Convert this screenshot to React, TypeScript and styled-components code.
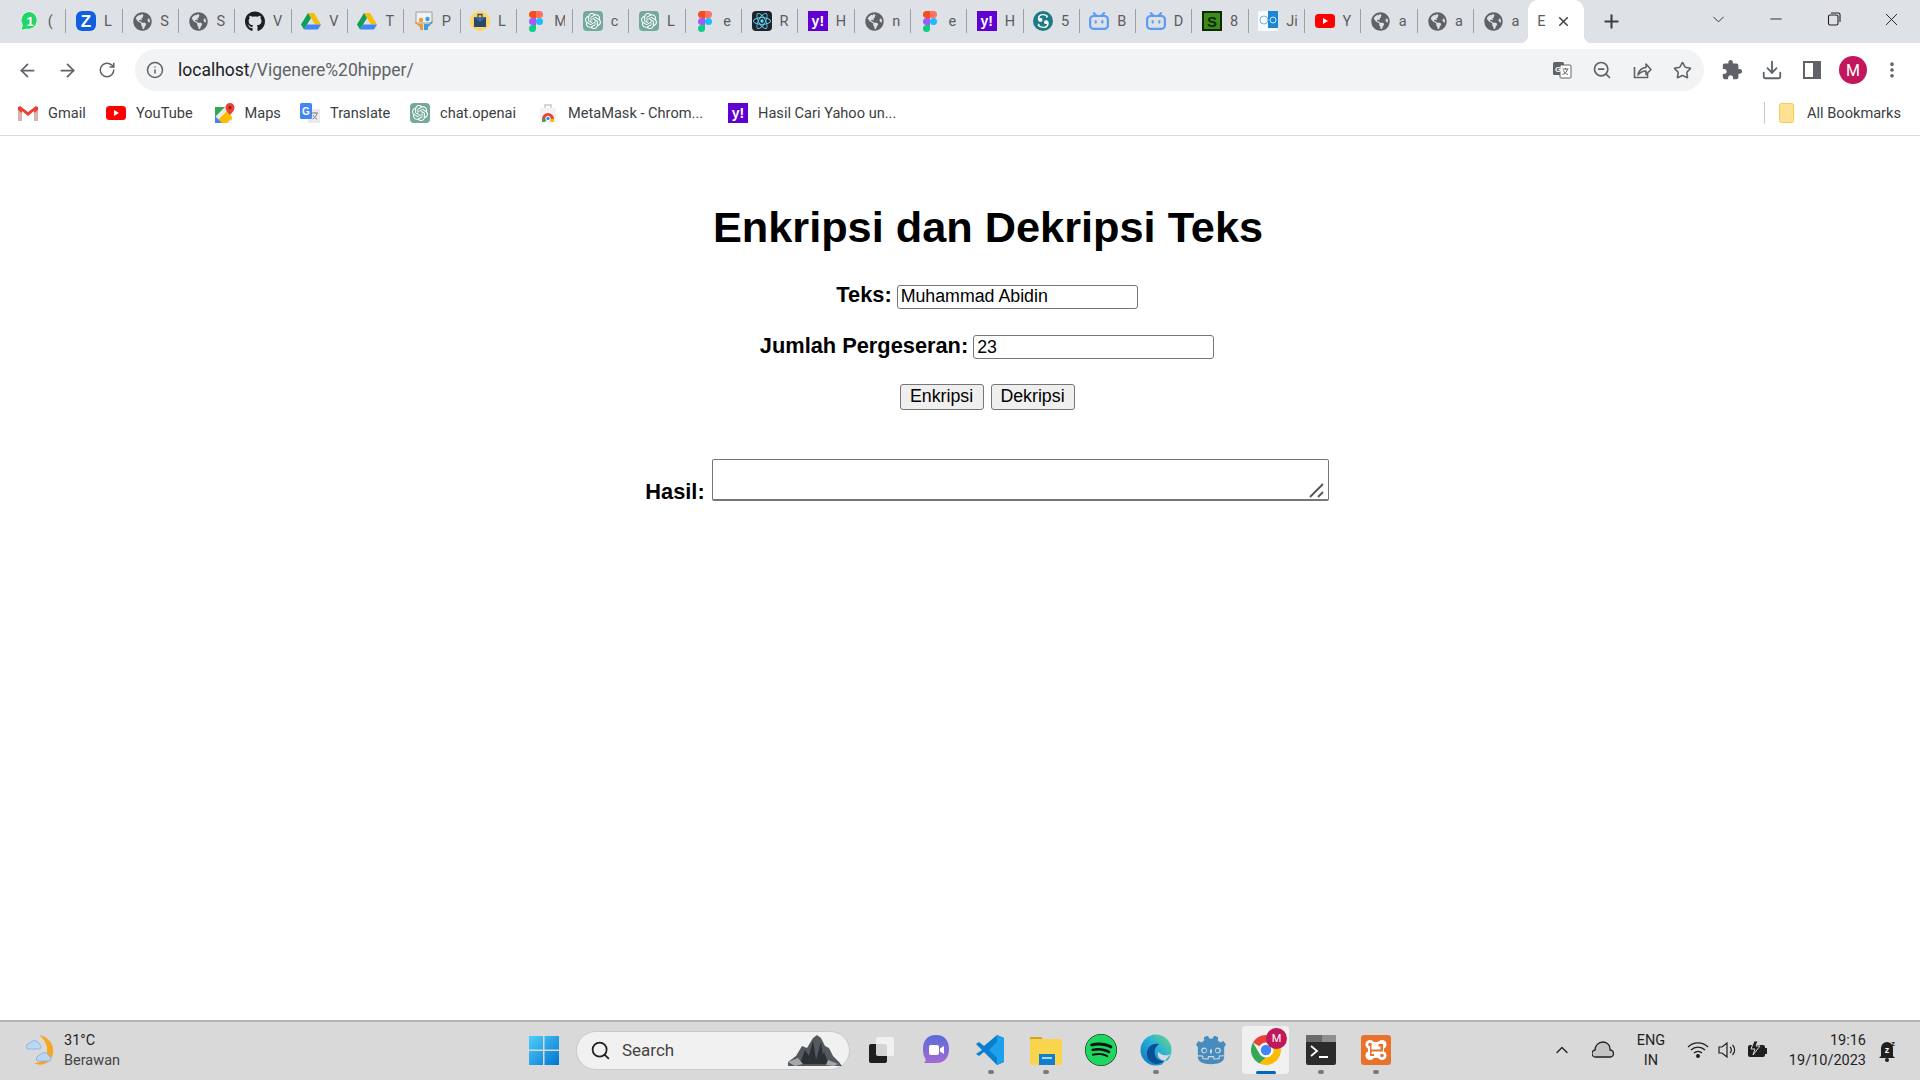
import React from "react";
import styled, { createGlobalStyle } from "styled-components";
import { ArrowLeft, ArrowRight, RotateCw, Info, ZoomOut, Star, Download, MoreVertical, Plus, X, Minus, ChevronDown, ChevronUp, Search } from "lucide-react";
import { FaGithub, FaGlobeAmericas, FaSpotify } from "react-icons/fa";
import { SiOpenai, SiBilibili, SiScribd, SiGodotengine, SiReact } from "react-icons/si";

const Global = createGlobalStyle`
  html, body { margin: 0; padding: 0; background: #fff; }
  * { box-sizing: border-box; }
  #root { height: 100vh; }
`;

const UI = `Roboto, "Noto Sans", sans-serif`;

const Shell = styled.div`
  display: flex;
  flex-direction: column;
  height: 1080px;
  overflow: hidden;
  font-family: ${UI};
`;

/* ---------- favicons ---------- */
const Whats = () => (
  <svg viewBox="0 0 20 20" width="20" height="20">
    <path d="M10 .5a9 9 0 0 0-7.700 13.800L1 19.500l5.400-1.300A9 9 0 1 0 10 .5z" fill="#25d366" stroke="#e8f8ee" strokeWidth="1" />
    <text x="10" y="14.500" textAnchor="middle" fontSize="13" fontWeight="700" fill="#fff" fontFamily="Liberation Sans">1</text>
  </svg>
);
const Zalo = () => (
  <svg viewBox="0 0 20 20" width="20" height="20">
    <rect width="20" height="20" rx="6" fill="#0f5fe0" />
    <text x="10" y="16" textAnchor="middle" fontSize="17" fontWeight="700" fill="#fff" fontFamily="Liberation Sans">Z</text>
  </svg>
);
const Drive = () => (
  <svg viewBox="0 0 20 18" width="20" height="18">
    <path d="M7 1h6l7 11.500h-6z" fill="#fbbc04" />
    <path d="M7 1 0 12.500l3 5L10 6z" fill="#0f9d58" />
    <path d="M3 17.500h14l3-5H6z" fill="#4285f4" />
  </svg>
);
const Present = () => (
  <svg viewBox="0 0 20 20" width="20" height="20">
    <rect x="2" y="1" width="16" height="11" fill="#f1f1f1" stroke="#9aa0a6" />
    <circle cx="7" cy="9" r="2.200" fill="#f29a2e" />
    <circle cx="13.500" cy="8" r="2.200" fill="#3aa0e0" />
    <path d="M1 10l4 3h4v6H6v-3L1 12zM19 9l-4 4h-4v6h3v-3l5-5z" fill="#f29a2e" />
    <path d="M10 13h5l3-3v2l-4 4v3h-4z" fill="#3aa0e0" />
  </svg>
);
const MailBag = () => (
  <svg viewBox="0 0 20 20" width="20" height="20">
    <circle cx="10" cy="10" r="10" fill="#fdd663" />
    <rect x="4" y="6" width="12" height="10" fill="#27496d" />
    <path d="M4 6l6 5 6-5" fill="#3d6b99" />
    <path d="M8 6V3.500h4V6" fill="none" stroke="#27496d" strokeWidth="1.300" />
  </svg>
);
const Figma = () => (
  <svg viewBox="0 0 14 21" width="14" height="21">
    <path d="M3.500 0H7v7H3.500a3.500 3.500 0 0 1 0-7z" fill="#f24e1e" />
    <path d="M7 0h3.500a3.500 3.500 0 0 1 0 7H7z" fill="#ff7262" />
    <path d="M3.500 7H7v7H3.500a3.500 3.500 0 0 1 0-7z" fill="#a259ff" />
    <circle cx="10.500" cy="10.500" r="3.500" fill="#1abcfe" />
    <path d="M3.500 14H7v3.500a3.500 3.500 0 1 1-3.500-3.500z" fill="#0acf83" />
  </svg>
);
const RoundBox = styled.span<{ $size: number; $bg: string }>`
  display: flex;
  align-items: center;
  justify-content: center;
  width: ${(p) => p.$size}px;
  height: ${(p) => p.$size}px;
  border-radius: 4px;
  background: ${(p) => p.$bg};
`;
const Gpt = ({ size = 20 }: { size?: number }) => (
  <RoundBox $size={size} $bg="#74aa9c"><SiOpenai size={size - 4} color="#fff" /></RoundBox>
);
const ReactFav = () => <RoundBox $size={20} $bg="#20232a"><SiReact size={18} color="#61dafb" /></RoundBox>;
const YahooMark = styled.span`
  display: flex;
  align-items: center;
  justify-content: center;
  width: 20px;
  height: 20px;
  background: #6001d2;
  color: #fff;
  font: 700 14px "Liberation Sans", sans-serif;
`;
const Yahoo = () => <YahooMark>y!</YahooMark>;
const RoundCircle = styled.span`
  display: flex;
  align-items: center;
  justify-content: center;
  width: 20px;
  height: 20px;
  border-radius: 50%;
  background: #1e7b85;
`;
const Scribd = () => (
  <RoundCircle><SiScribd size={14} color="#fff" /></RoundCircle>
);
const Bili = () => <SiBilibili size={20} color="#5b9df5" />;
const GreenS = () => (
  <svg viewBox="0 0 20 20" width="20" height="20">
    <rect width="20" height="20" fill="#0b2a05" />
    <rect x="2" y="2" width="16" height="16" fill="#3f8a1a" />
    <text x="10" y="15.500" textAnchor="middle" fontSize="15" fontWeight="700" fill="#0b2a05" fontFamily="Liberation Sans">S</text>
  </svg>
);
const JiFav = () => (
  <svg viewBox="0 0 20 20" width="20" height="20">
    <rect width="20" height="20" fill="#f4fafd" />
    <rect x="10" width="10" height="17" fill="#1b87d4" />
    <circle cx="6" cy="9" r="4" fill="none" stroke="#7fb6dc" />
    <circle cx="15" cy="9" r="3" fill="none" stroke="#cfe8f8" />
  </svg>
);
const Yt = ({ size = 20 }: { size?: number }) => (
  <svg viewBox="0 0 20 14" width={size} height={(size * 14) / 20}>
    <rect width="20" height="14" rx="3.500" fill="#f00" />
    <path d="M8 4l5 3-5 3z" fill="#fff" />
  </svg>
);
const Globe = () => <FaGlobeAmericas size={19} color="#5f6368" />;
const Git = () => <FaGithub size={21} color="#1b1f23" />;

const tabs: [React.ReactNode, string][] = [
  [<Whats />, "("], [<Zalo />, "L"], [<Globe />, "S"], [<Globe />, "S"], [<Git />, "V"], [<Drive />, "V"], [<Drive />, "T"],
  [<Present />, "P"], [<MailBag />, "L"], [<Figma />, "M"], [<Gpt />, "c"], [<Gpt />, "L"], [<Figma />, "e"], [<ReactFav />, "R"],
  [<Yahoo />, "H"], [<Globe />, "n"], [<Figma />, "e"], [<Yahoo />, "H"], [<Scribd />, "5"], [<Bili />, "B"], [<Bili />, "D"],
  [<GreenS />, "8"], [<JiFav />, "Ji"], [<Yt />, "Y"], [<Globe />, "a"], [<Globe />, "a"], [<Globe />, "a"],
];

/* ---------- tab strip ---------- */
const TabStrip = styled.div`
  display: flex;
  align-items: stretch;
  height: 43px;
  padding-left: 10.200px;
  background: #dee1e6;
  flex: none;
`;
const Tab = styled.div<{ $last: boolean }>`
  display: flex;
  align-items: center;
  width: 56.300px;
  height: 24px;
  margin-top: 9px;
  padding-left: 9.500px;
  border-right: ${(p) => (p.$last ? "none" : "1px solid #9aa0a6")};
  flex: none;
`;
const FavSlot = styled.span`
  display: flex;
  align-items: center;
  justify-content: center;
  width: 20px;
  height: 21px;
  flex: none;
`;
const TabTitle = styled.span`
  width: 11px;
  margin-left: 8px;
  overflow: hidden;
  white-space: nowrap;
  font-size: 14.500px;
  color: #5a5c60;
`;
const ActiveTab = styled.div`
  position: relative;
  display: flex;
  align-items: center;
  width: 56px;
  margin-left: -2px;
  padding: 0 0 0 9px;
  background: #fff;
  border-radius: 10px 10px 0 0;
  flex: none;
  color: #5a5c60;
  font-size: 14.500px;
  &::before, &::after {
    content: "";
    position: absolute;
    bottom: 0;
    width: 8px;
    height: 8px;
  }
  &::before { left: -8px; background: radial-gradient(circle at 0 0, #dee1e6 8px, #fff 8.500px); }
  &::after { right: -8px; background: radial-gradient(circle at 100% 0, #dee1e6 8px, #fff 8.500px); }
`;
const ActiveTitle = styled.span`
  width: 14px;
  overflow: hidden;
`;
const CloseSlot = styled.span`
  display: flex;
  margin-left: 5px;
  color: #3c4043;
`;
const NewTab = styled.div`
  display: flex;
  align-items: center;
  justify-content: center;
  width: 28px;
  margin-left: 13px;
  color: #3c4043;
`;
const WindowControls = styled.div`
  display: flex;
  margin-left: auto;
`;
const Caption = styled.div`
  display: flex;
  align-items: center;
  justify-content: center;
  width: 57.500px;
  height: 38px;
  color: #202124;
`;
const MaxIcon = () => (
  <svg viewBox="0 0 14 14" width="14" height="14" fill="none" stroke="#202124" strokeWidth="1.100">
    <rect x="1.500" y="3" width="9.500" height="10" rx="1.500" />
    <path d="M4 1h7.500A1.500 1.500 0 0 1 13 2.500V10" />
  </svg>
);

/* ---------- toolbar ---------- */
const Toolbar = styled.div`
  display: flex;
  align-items: center;
  height: 48px;
  padding: 6px 8px 0 7px;
  background: #fff;
  flex: none;
`;
const ToolBtn = styled.div`
  display: flex;
  align-items: center;
  justify-content: center;
  width: 40px;
  height: 42px;
  color: #5f6368;
  flex: none;
`;
const Omnibox = styled.div`
  display: flex;
  align-items: center;
  flex: 1;
  height: 42px;
  margin: 0 8px;
  padding: 0 2px 0 11px;
  border-radius: 21px;
  background: #f1f3f4;
`;
const InfoSlot = styled.span`
  display: flex;
  width: 18px;
  color: #5f6368;
`;
const Url = styled.div`
  flex: 1;
  margin-left: 14px;
  font-size: 17.500px;
  color: #5f6368;
  white-space: nowrap;
`;
const Host = styled.span`
  color: #202124;
`;
const Avatar = styled.div`
  display: flex;
  align-items: center;
  justify-content: center;
  width: 28px;
  height: 28px;
  margin-left: 2px;
  border-radius: 50%;
  background: #c2185b;
  color: #fff;
  font-size: 16px;
`;
const TranslateIcon = () => (
  <svg viewBox="0 0 20 20" width="20" height="20">
    <rect x="1" y="2" width="11" height="13" rx="1.500" fill="#5f6368" />
    <rect x="8" y="5" width="11" height="13" rx="1" fill="#fff" stroke="#5f6368" />
    <text x="6" y="12" textAnchor="middle" fontSize="8" fontWeight="700" fill="#fff" fontFamily="Liberation Sans">G</text>
    <path d="M10.500 9h6M13.500 8v1M15.500 9c-.5 3-3 5-5 5.500M11.500 10.500c.7 2 2.500 3.500 4.500 4" fill="none" stroke="#5f6368" />
  </svg>
);
const ShareIcon = () => (
  <svg viewBox="0 0 20 20" width="20" height="20" fill="none" stroke="#5f6368" strokeWidth="1.600">
    <path d="M2.500 7v10.500h13V13" />
    <path d="M6 15c.5-4.500 4-7.500 8-7.500V4l5 5.500-5 5V11c-3.500 0-6 1.500-8 4z" strokeLinejoin="round" />
  </svg>
);
const SideIcon = () => (
  <svg viewBox="0 0 18 18" width="18" height="18">
    <path fillRule="evenodd" clipRule="evenodd" d="M0 0h18v18H0zM2 2v14h8V2z" fill="#5f6368" />
  </svg>
);
const PuzzleIcon = () => (
  <svg viewBox="0 0 24 24" width="22" height="22" fill="#5f6368">
    <path d="M20.500 11H19V7c0-1.100-.9-2-2-2h-4V3.500C13 2.120 11.880 1 10.500 1S8 2.120 8 3.500V5H4c-1.100 0-1.990.9-1.990 2v3.800H3.500c1.490 0 2.700 1.210 2.700 2.700s-1.210 2.700-2.700 2.700H2V20c0 1.100.9 2 2 2h3.800v-1.500c0-1.490 1.210-2.700 2.700-2.700 1.490 0 2.700 1.210 2.700 2.700V22H17c1.100 0 2-.9 2-2v-4h1.500c1.380 0 2.500-1.120 2.500-2.500S21.880 11 20.500 11z" />
  </svg>
);

/* ---------- bookmarks ---------- */
const BookmarkBar = styled.div`
  display: flex;
  align-items: center;
  height: 45px;
  padding: 0 19px 0 18px;
  border-bottom: 1px solid #dadce0;
  background: #fff;
  font-size: 14.600px;
  color: #3c4043;
  flex: none;
`;
const Bookmark = styled.div<{ $w: number }>`
  display: flex;
  align-items: center;
  gap: 10px;
  width: ${(p) => p.$w}px;
  white-space: nowrap;
  flex: none;
`;
const BookmarkIcon = styled.span`
  display: flex;
  align-items: center;
  justify-content: center;
  width: 20px;
  height: 20px;
  flex: none;
`;
const AllBookmarks = styled.div`
  display: flex;
  align-items: center;
  gap: 12px;
  height: 22px;
  margin-left: auto;
  padding-left: 14px;
  border-left: 1px solid #c8cacc;
  white-space: nowrap;
`;
const GmailIcon = () => (
  <svg viewBox="0 0 20 16" width="20" height="16">
    <path d="M0 2v14h4V6l6 5 6-5v10h4V2l-2-1-8 6-8-6z" fill="#ea4335" />
    <path d="M0 16V5l4 3v8z" fill="#d9b3aa" />
    <path d="M20 16V5l-4 3v8z" fill="#d9b3aa" />
  </svg>
);
const MapsIcon = () => (
  <svg viewBox="0 0 20 20" width="20" height="20">
    <path d="M0 4h14v16H0z" fill="#e8eaed" />
    <path d="M0 4h10L0 14z" fill="#34a853" />
    <path d="M0 20l12-12 5 6v6H0z" fill="#fbbc04" />
    <path d="M0 20v-7l7 7z" fill="#4285f4" />
    <path d="M12 20l4-4 2 4z" fill="#f1f3f4" />
    <path d="M15 0a4.500 4.500 0 0 1 4.500 4.500C19.500 8 15 12 15 12s-4.500-4-4.500-7.500A4.500 4.500 0 0 1 15 0z" fill="#ea4335" />
    <circle cx="15" cy="4.500" r="1.500" fill="#8a1c12" />
  </svg>
);
const TranslateFav = () => (
  <svg viewBox="0 0 20 20" width="20" height="20">
    <rect x="8" y="6" width="12" height="14" rx="1" fill="#e8eaed" />
    <rect x="0" y="0" width="12" height="16" rx="1.500" fill="#4285f4" />
    <text x="6" y="12" textAnchor="middle" fontSize="10" fontWeight="700" fill="#fff" fontFamily="Liberation Sans">G</text>
    <path d="M12 10h6M15 9v1M17 10c-.5 3-2.500 5-4.500 6M13 12c.8 2 2.500 3.500 4 4" fill="none" stroke="#80868b" />
  </svg>
);
const StoreIcon = () => (
  <svg viewBox="0 0 20 20" width="20" height="20">
    <path d="M2 5h16v14H2z" fill="#f1f3f4" />
    <path d="M7 5V2h6v3" fill="none" stroke="#c4c7c5" strokeWidth="1.400" />
    <path d="M4 16a6 6 0 0 1 12 0z" fill="#ea4335" />
    <path d="M4 16h5l-2 3H4z" fill="#34a853" />
    <path d="M16 16h-5l2 3h3z" fill="#fbbc04" />
    <circle cx="10" cy="15.500" r="2.200" fill="#4285f4" stroke="#fff" />
  </svg>
);
const FolderIcon = () => (
  <svg viewBox="0 0 16 20" width="16" height="20">
    <rect x=".5" y=".5" width="14" height="19" rx="2" fill="#fde293" stroke="#f7cb4d" />
  </svg>
);

/* ---------- page ---------- */
const Main = styled.main`
  flex: 1;
  display: flex;
  flex-direction: column;
  align-items: center;
  padding-left: 54px;
  background: #fff;
  font-family: "Liberation Sans", Arial, sans-serif;
  color: #000;
`;
const Title = styled.h1`
  margin: 67px 0 0 2px;
  font-size: 43.300px;
  line-height: 49px;
  font-weight: 700;
`;
const FieldRow = styled.div<{ $top: number }>`
  display: flex;
  align-items: baseline;
  gap: 5px;
  margin-top: ${(p) => p.$top}px;
`;
const Label = styled.label`
  font-size: 21.800px;
  font-weight: 700;
`;
const TextInput = styled.input`
  width: 241px;
  height: 24px;
  padding: 1px 3px;
  border: 1.330px solid #767676;
  border-radius: 3px;
  background: #fff;
  font: 17.780px "Liberation Sans", Arial, sans-serif;
  color: #000;
  outline: none;
`;
const Buttons = styled.div`
  display: flex;
  gap: 7px;
  margin-top: 25px;
`;
const ActionButton = styled.button`
  width: 84px;
  height: 25.500px;
  padding: 0;
  border: 1.330px solid #767676;
  border-radius: 3px;
  background: #efefef;
  font: 17.780px "Liberation Sans", Arial, sans-serif;
  color: #000;
`;
const ResultRow = styled.div`
  display: flex;
  align-items: flex-end;
  gap: 7px;
  margin-top: 49px;
`;
const ResultLabel = styled(Label)`
  line-height: 24px;
  margin-bottom: -3px;
`;
const ResultBox = styled.div`
  position: relative;
  display: flex;
`;
const ResultArea = styled.textarea`
  display: block;
  width: 617px;
  height: 42px;
  padding: 2px;
  border: 1.330px solid #767676;
  border-bottom-width: 2px;
  border-radius: 2px;
  background: #fff;
  outline: none;
  resize: none;
`;
const Grip = styled.svg`
  position: absolute;
  right: 4px;
  bottom: 3px;
  width: 16px;
  height: 16px;
`;

/* ---------- taskbar ---------- */
const Taskbar = styled.footer`
  display: flex;
  align-items: center;
  height: 60px;
  padding-bottom: 2px;
  border-top: 2px solid #b4b4b4;
  background: #d9d9d9;
  color: #1f1f1f;
  flex: none;
`;
const Weather = styled.div`
  display: flex;
  align-items: center;
  gap: 7px;
  width: 526px;
  padding-left: 25px;
  flex: none;
`;
const StackedText = styled.div<{ $align?: string }>`
  display: flex;
  flex-direction: column;
  gap: 3px;
  align-items: ${(p) => p.$align ?? "flex-start"};
  font-size: 14.500px;
  line-height: 17px;
  white-space: nowrap;
`;
const Muted = styled.span`
  color: #444;
`;
const StartBtn = styled.div`
  display: flex;
  justify-content: center;
  width: 36px;
  flex: none;
`;
const SearchPill = styled.div`
  display: flex;
  align-items: center;
  width: 274px;
  height: 39px;
  margin: 0 3px 0 14px;
  padding: 0 7px 0 13px;
  border-radius: 20px;
  border: 1px solid #c9c9c9;
  background: #f1f1f1;
  font-size: 17px;
  color: #444;
  flex: none;
`;
const SearchText = styled.span`
  flex: 1;
  margin-left: 11px;
`;
const AppSlot = styled.div<{ $active?: boolean }>`
  position: relative;
  display: flex;
  align-items: center;
  justify-content: center;
  width: ${(p) => (p.$active ? "47px" : "55px")};
  height: 48px;
  margin: 0 ${(p) => (p.$active ? "4px" : "0")};
  border-radius: 4px;
  background: ${(p) => (p.$active ? "#f0f0f0" : "transparent")};
  flex: none;
`;
const Running = styled.span<{ $active?: boolean }>`
  position: absolute;
  bottom: 0;
  left: 50%;
  width: ${(p) => (p.$active ? "20px" : "6px")};
  height: ${(p) => (p.$active ? "3px" : "4px")};
  margin-left: ${(p) => (p.$active ? "-10px" : "-3px")};
  border-radius: 2px;
  background: ${(p) => (p.$active ? "#0067c0" : "#7a7a7a")};
`;
const SpotifyBack = styled.span`
  display: flex;
  border-radius: 50%;
  background: #111;
`;
const Tray = styled.div`
  display: flex;
  align-items: center;
  margin-left: auto;
  padding-right: 13px;
`;
const TrayCell = styled.div<{ $w: number; $end?: boolean; $gap?: number }>`
  display: flex;
  align-items: center;
  justify-content: ${(p) => (p.$end ? "flex-end" : "center")};
  width: ${(p) => p.$w}px;
  margin-left: ${(p) => p.$gap ?? 0}px;
  flex: none;
`;
const Badge = styled.span`
  position: absolute;
  top: 2px;
  right: 2px;
  display: flex;
  align-items: center;
  justify-content: center;
  width: 21px;
  height: 21px;
  border-radius: 50%;
  background: #c2185b;
  color: #fff;
  font-size: 11px;
`;

const WeatherIcon = () => (
  <svg viewBox="0 0 32 34" width="32" height="34">
    <path d="M14 2c12 2 18 14 12 24-4 6-12 7-17 4 8 0 14-6 13-15-.5-5-4-10-8-13z" fill="#f5a623" />
    <path d="M2 16a4 4 0 0 1 3-6 5 5 0 0 1 9 1 3 3 0 0 1 1 5z" fill="#bcd6f5" stroke="#8fb6e8" />
    <path d="M12 28a4 4 0 0 1 3-6 5 5 0 0 1 9 1 3 3 0 0 1 1 5z" fill="#bcd6f5" stroke="#8fb6e8" />
  </svg>
);
const WinLogo = () => (
  <svg viewBox="0 0 30 30" width="30" height="30">
    <defs>
      <linearGradient id="wl" x1="0" y1="0" x2="1" y2="1">
        <stop offset="0" stopColor="#4fd0fb" />
        <stop offset="1" stopColor="#0173d0" />
      </linearGradient>
    </defs>
    <path d="M0 1h14v13.500H0zM15.500 1H30v13.500H15.500zM0 16h14v14H0zM15.500 16H30v14H15.500z" fill="url(#wl)" />
  </svg>
);
const Mountain = () => (
  <svg viewBox="0 0 54 32" width="54" height="32">
    <path d="M0 28l8-6 6-10 5 2 6-10 4-3 4 3 4 8 4 2 4 8 6 6 3 4H0z" fill="#54595e" />
    <path d="M12 30l5-14 4 6 4-16 3 20 5-18 3 22zM30 30l6-12 5 12z" fill="#2c3034" />
    <path d="M0 28l10-4 5 6-8 2zM40 26l10 4-4 2-8-1z" fill="#a5a8ab" />
  </svg>
);
const TaskView = () => (
  <svg viewBox="0 0 30 30" width="30" height="30">
    <rect x="3" y="9" width="18" height="19" rx="2" fill="#1f1f1f" />
    <rect x="10" y="2" width="18" height="19" rx="2" fill="#f4f4f4" opacity=".85" />
  </svg>
);
const MeetIcon = () => (
  <svg viewBox="0 0 30 32" width="30" height="32">
    <defs>
      <linearGradient id="mt" x1="0" y1="0" x2="0" y2="1">
        <stop offset="0" stopColor="#5b6cd8" />
        <stop offset="1" stopColor="#a26ad6" />
      </linearGradient>
    </defs>
    <path d="M15 1c9 0 13 6 13 14s-4 14-13 14H3c2-2 2-3 1-5-2-3-2-6-2-9C2 7 6 1 15 1z" fill="url(#mt)" />
    <rect x="8" y="11" width="10" height="10" rx="2" fill="#fff" />
    <path d="M19 14.500l4-2.500v8l-4-2.500z" fill="#fff" />
  </svg>
);
const VsCode = () => (
  <svg viewBox="0 0 30 32" width="30" height="32">
    <path d="M21 1l7 3v24l-7 3L8 18l-5 4-3-2 6-4-6-6 3-2 5 4z" fill="#0a7fd0" />
    <path d="M21 1l7 3v24l-7 3zM21 8l-8 8 8 8z" fill="#1fa0ea" fillRule="evenodd" />
  </svg>
);
const FilesIcon = () => (
  <svg viewBox="0 0 32 30" width="32" height="30">
    <path d="M0 2h11l3 3h-14z" fill="#d8a215" />
    <rect y="4" width="32" height="26" rx="1" fill="#fbd44e" />
    <rect x="9" y="19" width="16" height="11" fill="#0f7ecf" />
    <rect x="12" y="22" width="10" height="2" fill="#a7d8f7" />
  </svg>
);
const EdgeIcon = () => (
  <svg viewBox="0 0 32 32" width="32" height="32">
    <defs>
      <linearGradient id="ed" x1="1" y1="0" x2="0" y2="1">
        <stop offset="0" stopColor="#6fdc7f" />
        <stop offset=".45" stopColor="#28b0d8" />
        <stop offset="1" stopColor="#0e6fc4" />
      </linearGradient>
    </defs>
    <circle cx="16" cy="16" r="15.500" fill="url(#ed)" />
    <path d="M33 17c-2 4-7 5-10 4-2-1-4-2-5-3-1 4 1 7 4 8 3 1 6 1 8 0l3 7H20l13-16z" fill="#d9d9d9" />
    <path d="M19 10c-6-1-11 2-12 8-1 6 3 11 9 12 3 0 6-1 8-3-4 0-8-2-9-6-1-4 0-8 4-11z" fill="#0b4f94" />
  </svg>
);
const GodotIcon = () => <SiGodotengine size={30} color="#478cbf" />;
const ChromeIcon = () => (
  <svg viewBox="0 0 32 32" width="32" height="32">
    <path d="M16 1a15 15 0 0 1 13 7.500H16a7.500 7.500 0 0 0-6.500 3.750L3 8.500A15 15 0 0 1 16 1z" fill="#ea4335" />
    <path d="M3 8.500l6.500 11.250A7.500 7.500 0 0 0 16 23.500L9.500 29.500A15 15 0 0 1 3 8.500z" fill="#34a853" />
    <path d="M29 8.500A15 15 0 0 1 9.500 29.500L16 23.500a7.500 7.500 0 0 0 6.500-11.250z" fill="#fbbc04" />
    <circle cx="16" cy="16" r="6" fill="#4285f4" stroke="#fff" strokeWidth="1.500" />
  </svg>
);
const TermIcon = () => (
  <svg viewBox="0 0 30 30" width="30" height="30">
    <rect width="30" height="30" rx="2" fill="#2b2b2b" />
    <rect width="30" height="7" fill="#6b6b6b" />
    <rect x="16" width="14" height="7" fill="#8f8f8f" />
    <path d="M5 11l6 5-6 5" fill="none" stroke="#fff" strokeWidth="1.800" />
    <rect x="13" y="21" width="9" height="2" fill="#fff" />
  </svg>
);
const XamppIcon = () => (
  <svg viewBox="0 0 30 30" width="30" height="30">
    <rect width="30" height="30" rx="3" fill="#e8722a" />
    <g fill="#fff">
      <circle cx="9" cy="9.500" r="4.500" />
      <circle cx="21" cy="9.500" r="4.500" />
      <circle cx="9" cy="20.500" r="4.500" />
      <circle cx="21" cy="20.500" r="4.500" />
      <rect x="9" y="7" width="12" height="16" />
      <rect x="7" y="9" width="16" height="12" />
    </g>
    <g fill="#e8722a">
      <circle cx="9" cy="9.500" r="1.800" />
      <circle cx="21" cy="20.500" r="1.800" />
      <path d="M9 11h1.500v3.500h9v-3h-2V9h4.500v7.500H10.500V19H13v2H9z" />
    </g>
  </svg>
);
const CloudTray = () => (
  <svg viewBox="0 0 22 20" width="22" height="20">
    <path d="M4 17a3.500 3.500 0 0 1-1-7 8 8 0 0 1 8-8 7 7 0 0 1 7 8 3.500 3.500 0 0 1 0 7z" fill="#c4c4c4" stroke="#1f1f1f" strokeWidth="1.300" />
  </svg>
);
const WifiTray = () => (
  <svg viewBox="0 0 22 20" width="22" height="20" fill="none" stroke="#1f1f1f" strokeWidth="1.300">
    <path d="M1 7a14 14 0 0 1 20 0M4 10a10 10 0 0 1 14 0M7 13a6 6 0 0 1 8 0" />
    <circle cx="11" cy="16" r="1.300" fill="#1f1f1f" />
  </svg>
);
const SpeakerTray = () => (
  <svg viewBox="0 0 20 20" width="20" height="20" fill="none" stroke="#1f1f1f" strokeWidth="1.200">
    <path d="M2 7h3l5-4v14l-5-4H2z" />
    <path d="M13 7a4 4 0 0 1 0 6M15.500 5a7 7 0 0 1 0 10" />
  </svg>
);
const BatteryTray = () => (
  <svg viewBox="0 0 22 20" width="22" height="20">
    <rect x="2" y="5" width="17" height="12" rx="2" fill="#1f1f1f" />
    <rect x="19" y="8" width="2" height="6" fill="#1f1f1f" />
    <path d="M8 1L5 9h4l-2 6 7-9h-4l2-5z" fill="#1f1f1f" stroke="#d9d9d9" />
  </svg>
);
const BellTray = () => (
  <svg viewBox="0 0 20 24" width="20" height="24">
    <path d="M4 18V10a6 6 0 0 1 12 0v8l2 2H2z" fill="#1f1f1f" />
    <circle cx="10" cy="22" r="2" fill="#1f1f1f" />
    <text x="10" y="15" textAnchor="middle" fontSize="9" fontWeight="700" fill="#fff" fontFamily="Liberation Sans">z</text>
    <text x="16" y="8" textAnchor="middle" fontSize="8" fontWeight="700" fill="#1f1f1f" fontFamily="Liberation Sans">z</text>
  </svg>
);

export default function App() {
  return (
    <Shell>
      <Global />
      <TabStrip>
        {tabs.map(([icon, title], i) => (
          <Tab key={i} $last={i === tabs.length - 1}>
            <FavSlot>{icon}</FavSlot>
            <TabTitle>{title}</TabTitle>
          </Tab>
        ))}
        <ActiveTab>
          <ActiveTitle>E</ActiveTitle>
          <CloseSlot><X size={15} strokeWidth={2.4} /></CloseSlot>
        </ActiveTab>
        <NewTab><Plus size={21} strokeWidth={2.4} /></NewTab>
        <WindowControls>
          <Caption><ChevronDown size={19} strokeWidth={1.1} /></Caption>
          <Caption><Minus size={18} strokeWidth={1.2} /></Caption>
          <Caption><MaxIcon /></Caption>
          <Caption><X size={21} strokeWidth={1.1} /></Caption>
        </WindowControls>
      </TabStrip>

      <Toolbar>
        <ToolBtn><ArrowLeft size={21} strokeWidth={2} /></ToolBtn>
        <ToolBtn><ArrowRight size={21} strokeWidth={2} /></ToolBtn>
        <ToolBtn><RotateCw size={18} strokeWidth={2} /></ToolBtn>
        <Omnibox>
          <InfoSlot><Info size={18} strokeWidth={2} /></InfoSlot>
          <Url><Host>localhost</Host>/Vigenere%20hipper/</Url>
          <ToolBtn><TranslateIcon /></ToolBtn>
          <ToolBtn><ZoomOut size={20} strokeWidth={2} /></ToolBtn>
          <ToolBtn><ShareIcon /></ToolBtn>
          <ToolBtn><Star size={19} strokeWidth={2} /></ToolBtn>
        </Omnibox>
        <ToolBtn><PuzzleIcon /></ToolBtn>
        <ToolBtn><Download size={22} strokeWidth={2} /></ToolBtn>
        <ToolBtn><SideIcon /></ToolBtn>
        <ToolBtn><Avatar>M</Avatar></ToolBtn>
        <ToolBtn><MoreVertical size={20} strokeWidth={2.4} /></ToolBtn>
      </Toolbar>

      <BookmarkBar>
        <Bookmark $w={88}><BookmarkIcon><GmailIcon /></BookmarkIcon>Gmail</Bookmark>
        <Bookmark $w={108.500}><BookmarkIcon><Yt /></BookmarkIcon>YouTube</Bookmark>
        <Bookmark $w={85.500}><BookmarkIcon><MapsIcon /></BookmarkIcon>Maps</Bookmark>
        <Bookmark $w={110}><BookmarkIcon><TranslateFav /></BookmarkIcon>Translate</Bookmark>
        <Bookmark $w={128}><BookmarkIcon><Gpt /></BookmarkIcon>chat.openai</Bookmark>
        <Bookmark $w={190}><BookmarkIcon><StoreIcon /></BookmarkIcon>MetaMask - Chrom...</Bookmark>
        <Bookmark $w={190}><BookmarkIcon><Yahoo /></BookmarkIcon>Hasil Cari Yahoo un...</Bookmark>
        <AllBookmarks><FolderIcon />All Bookmarks</AllBookmarks>
      </BookmarkBar>

      <Main>
        <Title>Enkripsi dan Dekripsi Teks</Title>
        <FieldRow $top={30}>
          <Label>Teks:</Label>
          <TextInput defaultValue="Muhammad Abidin" />
        </FieldRow>
        <FieldRow $top={24}>
          <Label>Jumlah Pergeseran:</Label>
          <TextInput defaultValue="23" />
        </FieldRow>
        <Buttons>
          <ActionButton>Enkripsi</ActionButton>
          <ActionButton>Dekripsi</ActionButton>
        </Buttons>
        <ResultRow>
          <ResultLabel>Hasil:</ResultLabel>
          <ResultBox>
            <ResultArea />
            <Grip viewBox="0 0 16 16" fill="none" stroke="#555" strokeWidth="1.800">
              <path d="M1 15 14 2M9 15l5-5" />
            </Grip>
          </ResultBox>
        </ResultRow>
      </Main>

      <Taskbar>
        <Weather>
          <WeatherIcon />
          <StackedText>
            <span>31°C</span>
            <Muted>Berawan</Muted>
          </StackedText>
        </Weather>
        <StartBtn><WinLogo /></StartBtn>
        <SearchPill>
          <Search size={21} color="#1f1f1f" strokeWidth={2} />
          <SearchText>Search</SearchText>
          <Mountain />
        </SearchPill>
        <AppSlot><TaskView /></AppSlot>
        <AppSlot><MeetIcon /></AppSlot>
        <AppSlot><VsCode /><Running /></AppSlot>
        <AppSlot><FilesIcon /><Running /></AppSlot>
        <AppSlot><SpotifyBack><FaSpotify size={32} color="#1ed760" /></SpotifyBack></AppSlot>
        <AppSlot><EdgeIcon /><Running /></AppSlot>
        <AppSlot><GodotIcon /></AppSlot>
        <AppSlot $active><ChromeIcon /><Badge>M</Badge><Running $active /></AppSlot>
        <AppSlot><TermIcon /><Running /></AppSlot>
        <AppSlot><XamppIcon /><Running /></AppSlot>
        <Tray>
          <TrayCell $w={34}><ChevronUp size={20} color="#1f1f1f" strokeWidth={1.6} /></TrayCell>
          <TrayCell $w={48}><CloudTray /></TrayCell>
          <TrayCell $w={48}><StackedText $align="center"><span>ENG</span><span>IN</span></StackedText></TrayCell>
          <TrayCell $w={28} $gap={9}><WifiTray /></TrayCell>
          <TrayCell $w={30}><SpeakerTray /></TrayCell>
          <TrayCell $w={30}><BatteryTray /></TrayCell>
          <TrayCell $w={94} $end><StackedText $align="flex-end"><span>19:16</span><span>19/10/2023</span></StackedText></TrayCell>
          <TrayCell $w={41}><BellTray /></TrayCell>
        </Tray>
      </Taskbar>
    </Shell>
  );
}
